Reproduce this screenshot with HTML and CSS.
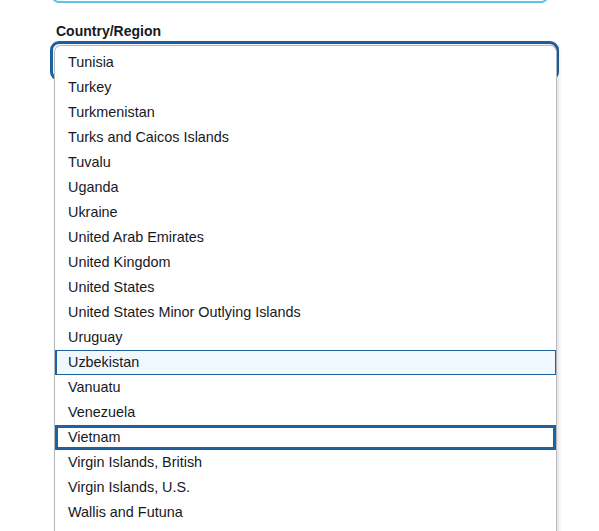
FILE: index.html
```html
<!DOCTYPE html>
<html lang="en">
<head>
<meta charset="utf-8">
<title>Country/Region</title>
<link rel="stylesheet" href="styles.css">
</head>
<body>
<div class="page">
  <div class="prev-input"></div>
  <div class="field">
    <label class="label">Country/Region</label>
    <div class="control">
      <div class="select"></div>
      <ul class="listbox">
        <li class="option">Tunisia</li>
        <li class="option">Turkey</li>
        <li class="option">Turkmenistan</li>
        <li class="option">Turks and Caicos Islands</li>
        <li class="option">Tuvalu</li>
        <li class="option">Uganda</li>
        <li class="option">Ukraine</li>
        <li class="option">United Arab Emirates</li>
        <li class="option">United Kingdom</li>
        <li class="option">United States</li>
        <li class="option">United States Minor Outlying Islands</li>
        <li class="option">Uruguay</li>
        <li class="option option-hover">Uzbekistan</li>
        <li class="option">Vanuatu</li>
        <li class="option">Venezuela</li>
        <li class="option option-selected">Vietnam</li>
        <li class="option">Virgin Islands, British</li>
        <li class="option">Virgin Islands, U.S.</li>
        <li class="option">Wallis and Futuna</li>
      </ul>
    </div>
  </div>
</div>
</body>
</html>
```

FILE: styles.css
```css
html, body {
  margin: 0;
  padding: 0;
  background: #ffffff;
}
body {
  font-family: "Liberation Sans", Arial, sans-serif;
  color: #16191f;
  overflow: hidden;
  height: 531px;
}
.page {
  padding-left: 50px;
  width: 509px;
}
.prev-input {
  height: 34px;
  margin-top: -35px;
  margin-left: 1px;
  margin-right: 10px;
  border: 2px solid #5ac6e4;
  border-radius: 8px;
}
.field {
  margin-top: 20px;
}
.label {
  display: block;
  margin-left: 6px;
  font-size: 14px;
  font-weight: bold;
  line-height: 16px;
  color: #16191f;
}
.control {
  position: relative;
  margin-top: 2px;
}
.select {
  height: 34px;
  border: 3px solid #1f609f;
  border-radius: 9px;
}
.listbox {
  position: absolute;
  top: 4px;
  left: 4px;
  right: 2px;
  height: 500px;
  margin: 0;
  padding: 4px 0 0;
  list-style: none;
  background: #ffffff;
  border: 1px solid #b5b9be;
  border-bottom: none;
  border-radius: 7px 7px 0 0;
  box-shadow: 2px 0 4px rgba(0, 0, 0, 0.12);
}
.option {
  height: 25px;
  line-height: 25px;
  padding-left: 13px;
  font-size: 14.4px;
  color: #16191f;
}
.option-hover {
  background: #eff8ff;
  box-shadow: inset 2px 0 0 #1f609f, inset 0 0 0 1px #1f609f;
}
.option-selected {
  box-shadow: inset 0 0 0 3px #1f609f;
}
```
